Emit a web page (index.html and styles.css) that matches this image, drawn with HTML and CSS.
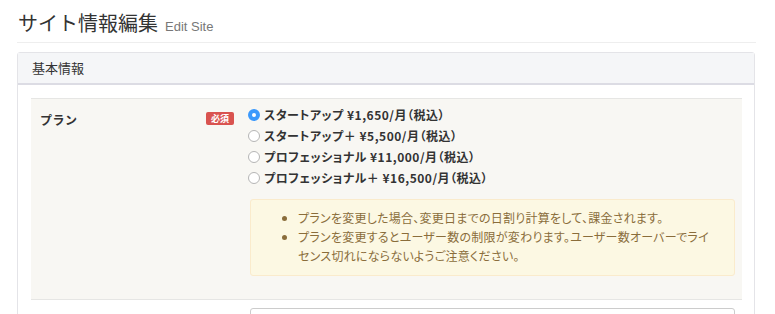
FILE: index.html
```html
<!DOCTYPE html>
<html lang="ja">
<head>
<meta charset="utf-8">
<title>サイト情報編集</title>
<link rel="stylesheet" href="styles.css">
</head>
<body>
<div class="page">
  <h1 class="title"><span class="title-main">サイト情報編集</span><small class="subtitle">Edit Site</small></h1>
  <div class="panel">
    <div class="panel-head">基本情報</div>
    <div class="panel-body">
      <div class="row row-plan">
        <div class="label-col">
          <span class="label">プラン</span>
          <span class="badge">必須</span>
        </div>
        <div class="control-col">
          <div class="radios">
            <label class="radio"><span class="dot checked"></span>スタートアップ ¥1,650/月（税込）</label>
            <label class="radio"><span class="dot"></span>スタートアップ＋ ¥5,500/月（税込）</label>
            <label class="radio"><span class="dot"></span>プロフェッショナル ¥11,000/月（税込）</label>
            <label class="radio"><span class="dot"></span>プロフェッショナル＋ ¥16,500/月（税込）</label>
          </div>
          <div class="alert">
            <ul class="notes">
              <li>プランを変更した場合、変更日までの日割り計算をして、課金されます。</li>
              <li>プランを変更するとユーザー数の制限が変わります。ユーザー数オーバーでライ<br>センス切れにならないようご注意ください。</li>
            </ul>
          </div>
        </div>
      </div>
      <div class="row row-next">
        <div class="label-col"></div>
        <div class="control-col">
          <div class="input"></div>
        </div>
      </div>
    </div>
  </div>
</div>
</body>
</html>
```
FILE: styles.css
```css
html, body {
  margin: 0;
  padding: 0;
  background: #fff;
  height: 314px;
  overflow: hidden;
}
body {
  font-family: "Noto Sans CJK JP", "Noto Sans", sans-serif;
  color: #333;
}
.page {
  padding: 0 19px 0 17px;
}
.title {
  margin: 0;
  padding: 9px 0 6px 1px;
  height: 27px;
  display: flex;
  align-items: baseline;
  gap: 7px;
  font-size: 20px;
  line-height: 27px;
  font-weight: 400;
  color: #333;
  border-bottom: 1px solid #eeeeee;
}
.title-main {
  line-height: 27px;
}
.subtitle {
  font-family: "Liberation Sans", Arial, sans-serif;
  font-size: 13px;
  line-height: 13px;
  color: #777;
  font-weight: 400;
}
.panel {
  margin-top: 9px;
  border: 1px solid #e4e4e8;
  border-radius: 3px;
  margin-right: 1px;
}
.panel-head {
  height: 30px;
  line-height: 30px;
  padding-left: 14px;
  background: #f5f6f8;
  border-bottom: 2px solid #dcdce4;
  font-size: 13px;
  color: #333;
}
.panel-body {
  padding: 13px 12px 0 13px;
}
.row {
  display: flex;
}
.row-plan {
  background: #f8f7f3;
  border-top: 1px solid #e6e6e4;
  border-bottom: 1px solid #e6e6e4;
  padding: 5px 0 23px;
}
.row-next {
  padding-top: 8px;
}
.label-col {
  width: 217px;
  flex: none;
  display: flex;
  align-items: flex-start;
  justify-content: space-between;
  padding: 6px 14px 0 9px;
  box-sizing: border-box;
}
.label {
  font-size: 12px;
  font-weight: 700;
  line-height: 20px;
  letter-spacing: 0.5px;
}
.badge {
  margin-top: 2px;
  width: 28px;
  height: 13px;
  line-height: 13px;
  text-align: center;
  background: #d9534f;
  color: #fff;
  font-size: 9px;
  font-weight: 700;
  border-radius: 2px;
}
.control-col {
  flex: 1;
  padding-right: 7px;
}
.radios {
  display: flex;
  flex-direction: column;
}
.radio {
  display: flex;
  align-items: center;
  height: 21px;
  font-size: 12px;
  font-weight: 700;
  color: #333;
  font-feature-settings: "palt";
  letter-spacing: 0.5px;
  white-space: nowrap;
}
.dot {
  width: 12px;
  height: 12px;
  box-sizing: border-box;
  border-radius: 50%;
  border: 1px solid #b5b5b5;
  background: #fff;
  margin-right: 4px;
  flex: none;
}
.dot.checked {
  border: 4px solid #3b99fc;
  background: #fff;
}
.alert {
  margin: 11px 0 0 2px;
  background: #fcf8e3;
  border: 1px solid #faebcc;
  border-radius: 3px;
  padding: 8px 15px 10px;
  color: #8a6d3b;
}
.notes {
  margin: 0;
  padding-left: 32px;
  font-size: 12px;
  line-height: 19px;
  white-space: nowrap;
  font-feature-settings: "palt";
  letter-spacing: 0.25px;
}
.input {
  margin-left: 2px;
  height: 30px;
  border: 1px solid #cccccc;
  border-radius: 3px;
  background: #fff;
}
```
